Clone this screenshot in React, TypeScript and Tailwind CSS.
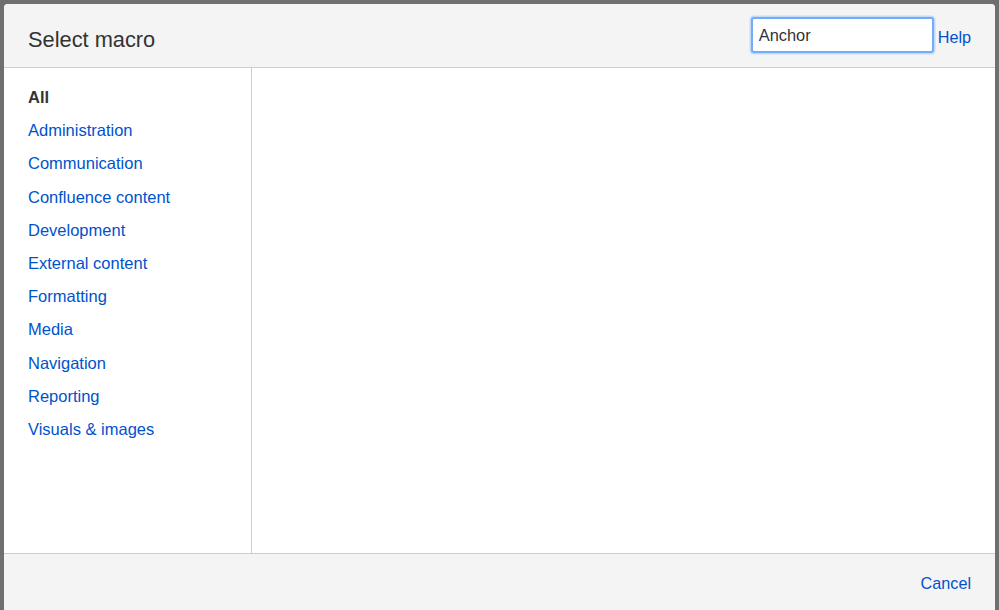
const categories = [
  'Administration',
  'Communication',
  'Confluence content',
  'Development',
  'External content',
  'Formatting',
  'Media',
  'Navigation',
  'Reporting',
  'Visuals & images',
];

export default function App() {
  return (
    <div
      className="h-[610px] w-[999px] overflow-hidden bg-[#6f6f6f] pl-[4px] pr-[4px] pt-[4px]"
      style={{ fontFamily: '"Liberation Sans", Arial, sans-serif' }}
    >
      <div className="flex h-[620px] flex-col overflow-hidden rounded-t-[4px] bg-white">
        {/* header */}
        <div className="flex h-[64px] shrink-0 items-center border-b border-[#cccccc] bg-[#f4f4f4] pl-[24px] pr-[24px]">
          <h1 className="mt-[9px] text-[21.8px] text-[#333333]">Select macro</h1>
          <div className="ml-auto flex items-center gap-[4px] pb-[1px]">
            <input
              defaultValue="Anchor"
              className="h-[36px] w-[183px] rounded-[3px] border-2 border-[#73adf8] bg-white px-[6px] text-[16.4px] text-[#333333] shadow-[0_0_0_1.5px_#c2dbfb] outline-none"
            />
            <a className="mt-[5px] text-[16.2px] text-[#0052cc]">Help</a>
          </div>
        </div>

        {/* body */}
        <div className="flex h-[485px] shrink-0">
          <ul className="w-[248px] shrink-0 border-r border-[#cccccc] pl-[24px] pt-[13px] text-[16.5px] leading-[33.2px]">
            <li className="font-bold text-[#333333]">All</li>
            {categories.map((c) => (
              <li key={c} className="text-[#0052cc]">
                {c}
              </li>
            ))}
          </ul>
          <div className="flex-1" />
        </div>

        {/* footer */}
        <div className="flex h-[60px] shrink-0 items-center justify-end border-t border-[#cccccc] bg-[#f4f4f4] pr-[24px]">
          <a className="mb-[1px] text-[16.2px] text-[#0052cc]">Cancel</a>
        </div>
      </div>
    </div>
  );
}
